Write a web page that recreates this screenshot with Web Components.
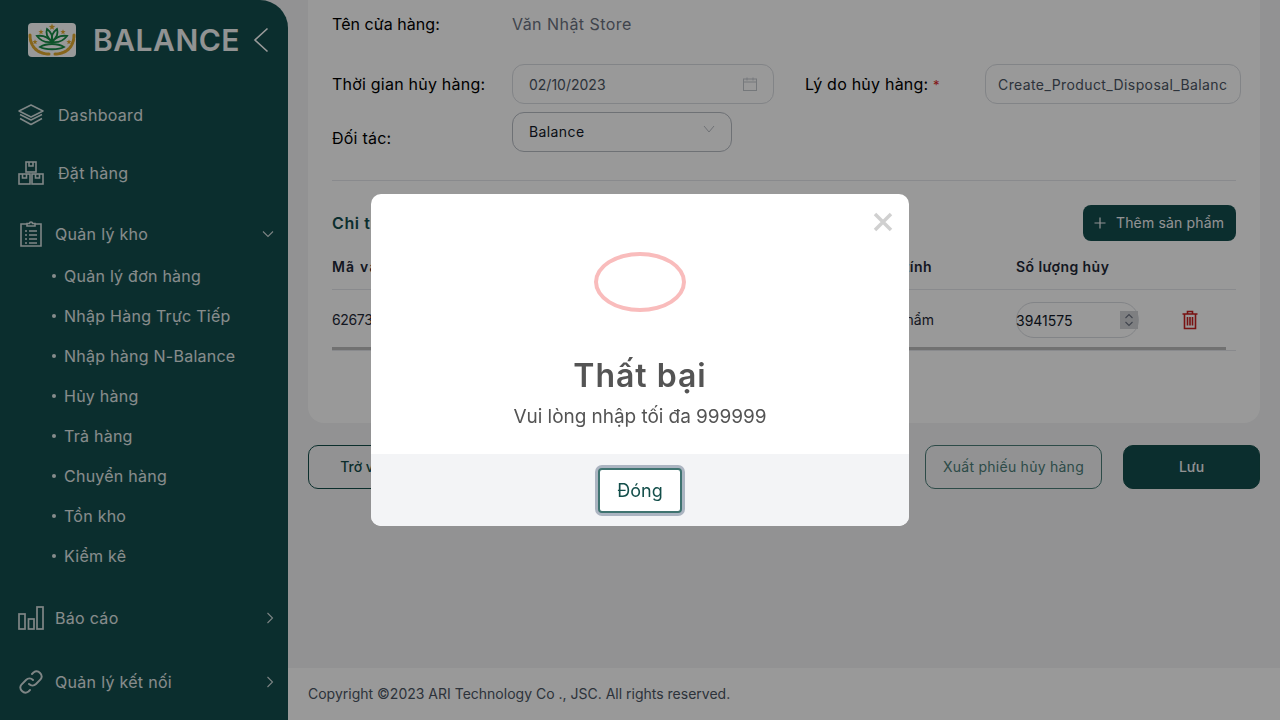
<!DOCTYPE html>
<html lang="vi">
<head>
<meta charset="utf-8">
<title>Balance</title>
<style>
  html, body { margin: 0; height: 100%; overflow: hidden; }
  body { font-family: Inter, "Noto Sans", sans-serif; }
</style>
</head>
<body>
<app-shell>
  <side-bar slot="side">
    <nav-item label="Dashboard" icon="layers" top="21"></nav-item>
    <nav-item label="Đặt hàng" icon="boxes" top="30"></nav-item>
    <nav-item label="Quản lý kho" icon="clipboard" arrow="down" top="33">
      <sub-item>Quản lý đơn hàng</sub-item>
      <sub-item>Nhập Hàng Trực Tiếp</sub-item>
      <sub-item>Nhập hàng N-Balance</sub-item>
      <sub-item>Hủy hàng</sub-item>
      <sub-item>Trả hàng</sub-item>
      <sub-item>Chuyển hàng</sub-item>
      <sub-item>Tồn kho</sub-item>
      <sub-item>Kiểm kê</sub-item>
    </nav-item>
    <nav-item label="Báo cáo" icon="chart" arrow="right" top="28"></nav-item>
    <nav-item label="Quản lý kết nối" icon="link" arrow="right" top="36"></nav-item>
  </side-bar>
  <disposal-form></disposal-form>
  <page-footer slot="footer">Copyright ©2023 ARI Technology Co ., JSC. All rights reserved.</page-footer>
</app-shell>
<alert-modal heading="Thất bại" message="Vui lòng nhập tối đa 999999" action="Đóng"></alert-modal>

<script>
const ICONS = {
  layers: '<svg width="26" height="22" viewBox="0 0 26 22" fill="none" stroke="currentColor" stroke-width="1.5" stroke-linejoin="round"><path d="M13 1 25 7 13 13 1 7Z"/><path d="M2 10.500 13 16 24 10.500"/><path d="M2 14.500 13 20.500 24 14.500"/></svg>',
  boxes: '<svg width="26" height="24" viewBox="0 0 26 24" fill="none" stroke="currentColor" stroke-width="1.6"><rect x="8" y="1" width="10" height="10"/><rect x="1" y="13" width="11" height="10"/><rect x="14" y="13" width="11" height="10"/><path d="M11 1v4h4V1M4.500 13v4h4v-4M17.500 13v4h4v-4"/></svg>',
  clipboard: '<svg width="22" height="26" viewBox="0 0 22 26" fill="none" stroke="currentColor" stroke-width="1.6"><path d="M7 3H1v22h20V3h-6"/><path d="M7 5V2.500h2.500a1.500 1.500 0 0 1 3 0H15V5Z"/><path d="M9 10h8M9 14h8M9 18h8M9 22h8" stroke-width="1.500"/><path d="M5 10h2M5 14h2M5 18h2M5 22h2" stroke-width="1.500"/></svg>',
  chart: '<svg width="26" height="24" viewBox="0 0 26 24" fill="none" stroke="currentColor" stroke-width="1.7"><rect x="1" y="8" width="6" height="15"/><rect x="10.500" y="13" width="5.500" height="10"/><rect x="19" y="1" width="6" height="22"/></svg>',
  link: '<svg width="24" height="24" viewBox="0 0 24 24" fill="none" stroke="currentColor" stroke-width="1.9" stroke-linecap="round" style="margin-left:-1px"><path d="M10 14a5 5 0 0 0 7 0l4.500-4.500a5 5 0 0 0-7-7L13 4"/><path d="M14 10a5 5 0 0 0-7 0l-4.500 4.500a5 5 0 0 0 7 7L11 20"/></svg>',
  down: '<svg width="12" height="8" viewBox="0 0 12 8" fill="none" stroke="currentColor" stroke-width="1.100"><path d="M1 1.500 6 6.500 11 1.500"/></svg>',
  right: '<svg width="8" height="12" viewBox="0 0 8 12" fill="none" stroke="currentColor" stroke-width="1.100"><path d="M1.500 1 6.500 6 1.500 11"/></svg>'
};

const star = (x, y, r) => {
  let pts = '';
  for (let i = 0; i < 10; i++) {
    const a = -Math.PI / 2 + i * Math.PI / 5;
    const d = i % 2 ? r * 0.42 : r;
    pts += (x + d * Math.cos(a)).toFixed(2) + ',' + (y + d * Math.sin(a)).toFixed(2) + ' ';
  }
  return `<polygon points="${pts}"/>`;
};

class AppShell extends HTMLElement {
  constructor() {
    super();
    this.attachShadow({ mode: 'open' }).innerHTML = `
      <style>
        :host { display: grid; grid-template-columns: 288px 1fr; width: 1280px; height: 720px; background: #f3f4f6; overflow: hidden; }
        main { display: flex; flex-direction: column; min-width: 0; height: 720px; }
        .content { flex: 1; min-height: 0; }
      </style>
      <slot name="side"></slot>
      <main>
        <div class="content"><slot></slot></div>
        <slot name="footer"></slot>
      </main>`;
  }
}

class SideBar extends HTMLElement {
  constructor() {
    super();
    this.attachShadow({ mode: 'open' }).innerHTML = `
      <style>
        :host { display: block; height: 720px; background: #134e4e; border-top-right-radius: 28px; color: #fff; overflow: hidden; }
        header { display: flex; align-items: center; height: 80px; padding-left: 28px; }
        .name { margin-left: 17px; font-size: 30px; font-weight: 600; letter-spacing: 0.5px; opacity: .95; }
        .back { margin-left: 13px; display: flex; }
      </style>
      <header>
        <svg width="48" height="34" viewBox="0 0 48 34">
          <rect width="48" height="34" rx="4" fill="#fff"/>
          <g fill="none" stroke="#e0a92e" stroke-width="3" stroke-linecap="round" stroke-dasharray="2.500 1.200">
            <path d="M2 12C2 24 10 31 21 31"/><path d="M46 12C46 24 38 31 27 31"/>
          </g>
          <g fill="#e0a92e">${star(24, 4, 3.4)}${star(13, 9, 2.8)}${star(35, 9, 2.8)}${star(7, 19, 2.8)}${star(41, 19, 2.8)}${star(24, 18, 2.6)}</g>
          <g fill="none" stroke="#178a45" stroke-width="1.800">
            <path d="M24 18C18 14 18 9 19 6C23 9 25 13 24 18Z"/><path d="M24 18C30 14 30 9 29 6C25 9 23 13 24 18Z"/>
            <path d="M24 19C17 20 12 17 9 13C15 12 20 14 24 19Z"/><path d="M24 19C31 20 36 17 39 13C33 12 28 14 24 19Z"/>
            <path d="M12 24C17 21 21 21 24 21C27 21 31 21 36 24C31 27 17 27 12 24Z"/>
          </g>
        </svg>
        <span class="name">BALANCE</span>
        <span class="back"><svg width="16" height="26" viewBox="0 0 16 26" fill="none" stroke="currentColor" stroke-width="1.600"><path d="M14.500 1.500 2 13 14.500 24.500"/></svg></span>
      </header>
      <slot></slot>`;
  }
}

class NavItem extends HTMLElement {
  constructor() {
    super();
    const name = this.getAttribute('icon');
    const arrow = this.getAttribute('arrow');
    const wide = name === 'layers' || name === 'boxes';
    const subs = this.children.length > 0;
    this.attachShadow({ mode: 'open' }).innerHTML = `
      <style>
        :host { display: block; margin-top: ${this.getAttribute('top')}px; }
        .row { display: flex; align-items: center; height: 28px; padding: 0 14px 0 18px; font-size: 16px; line-height: 28px; }
        .ico { width: 26px; display: flex; justify-content: center; margin-right: ${wide ? 14 : 11}px; opacity: .82; }
        .label { flex: 1; letter-spacing: 0.3px; opacity: .88; }
        .arrow { display: flex; opacity: .8; }
        .subs { margin-top: 8px; }
      </style>
      <div class="row">
        <span class="ico">${ICONS[name]}</span>
        <span class="label">${this.getAttribute('label')}</span>
        ${arrow ? `<span class="arrow">${ICONS[arrow]}</span>` : ''}
      </div>
      ${subs ? '<div class="subs"><slot></slot></div>' : ''}`;
  }
}

class SubItem extends HTMLElement {
  constructor() {
    super();
    this.attachShadow({ mode: 'open' }).innerHTML = `
      <style>
        :host { display: flex; align-items: center; height: 40px; padding-left: 52px; font-size: 16px; }
        i { width: 4px; height: 4px; border-radius: 50%; background: currentColor; margin-right: 8px; opacity: .88; }
        span { letter-spacing: 0.25px; opacity: .88; }
      </style>
      <i></i><span><slot></slot></span>`;
  }
}

class TextBox extends HTMLElement {
  constructor() {
    super();
    this.attachShadow({ mode: 'open' }).innerHTML = `
      <style>
        :host { display: flex; align-items: center; box-sizing: border-box; height: 40px; padding: 0 16px; border: 1px solid #d9dce1; border-radius: 12px; font-size: 14px; color: #4b5563; overflow: hidden; white-space: nowrap; }
        :host([dark]) { border-color: #b7bcc4; color: #111827; padding-bottom: 1px; letter-spacing: .4px; }
        .text { flex: 1; overflow: hidden; }
        ::slotted(svg) { flex: none; }
      </style>
      <span class="text"><slot></slot></span><slot name="end"></slot>`;
  }
}

class ActionButton extends HTMLElement {
  constructor() {
    super();
    this.attachShadow({ mode: 'open' }).innerHTML = `
      <style>
        :host { display: flex; align-items: center; justify-content: center; box-sizing: border-box; height: 44px; padding-bottom: 1px; border-radius: 10px; font-size: 14px; border: 1px solid #134e4a; color: #134e4a; white-space: nowrap; font-weight: 500; }
        :host([solid]) { background: #134e4e; color: #f3f4f6; }
        :host([soft]) { color: #4b7d78; border-color: #4b7d78; font-weight: 400; letter-spacing: .25px; }
      </style>
      <slot></slot>`;
  }
}

class DisposalForm extends HTMLElement {
  constructor() {
    super();
    this.attachShadow({ mode: 'open' }).innerHTML = `
      <style>
        :host { display: block; padding: 0 20px; color: #000; font-size: 16px; }
        .card { background: #fff; border-radius: 0 0 16px 16px; padding: 14px 24px 72px; height: 423px; box-sizing: border-box; }
        .store { display: flex; line-height: 20px; }
        .label { flex: none; width: 180px; letter-spacing: .22px; white-space: nowrap; }
        .store .label { letter-spacing: .05px; }
        .value { color: #6b7280; letter-spacing: .45px; }
        .grid { display: grid; grid-template-columns: 180px 262px 31px 180px 256px; margin-top: 30px; align-items: center; }
        .grid > * { min-width: 0; }
        .req { color: #dc2626; font-size: 13px; }
        .partner { display: grid; grid-template-columns: 180px 220px; margin-top: 8px; }
        .partner .label { align-self: end; line-height: 20px; padding-bottom: 4px; }
        hr { border: 0; border-top: 1px solid #e5e7eb; margin: 28px 0 24px; }
        .title { display: flex; justify-content: space-between; align-items: center; height: 36px; }
        h3 { margin: 0; font-size: 16px; font-weight: 600; color: #134e4e; letter-spacing: .6px; }
        .add { display: flex; align-items: center; gap: 10px; height: 36px; padding-bottom: 1px; width: 153px; box-sizing: border-box; padding-left: 11px; background: #134e4e; color: #f3f4f6; border-radius: 8px; font-size: 14px; letter-spacing: .15px; white-space: nowrap; }
        .cols { display: grid; align-items: center; white-space: nowrap; }
        .head { grid-template-columns: 268px 200px 132px 284px 20px; height: 45px; margin-top: 4px; padding-bottom: 2px; box-sizing: border-box; border-bottom: 1px solid #e5e7eb; font-size: 14px; font-weight: 600; color: #1f2937; letter-spacing: .45px; }
        .head .code { letter-spacing: 1.2px; }
        .body { grid-template-columns: 268px 200px 134px 248px 20px; padding: 12px 0 9px; font-size: 14px; color: #1f2937; }
        .end { text-align: right; }
        .body > span:not(.qty) { padding-bottom: 1px; }
        .body .code { letter-spacing: -.35px; }
        .qty { display: flex; align-items: center; justify-content: space-between; width: 123px; height: 36px; margin-left: 82px; box-sizing: border-box; border: 1px solid #d9dce1; border-radius: 18px; font-size: 14px; color: #111827; }
        .qty b { font-weight: 400; margin-left: -1px; }
        .spin { display: flex; align-items: center; justify-content: center; width: 18px; height: 18px; background: #d2d4d8; }
        .trash { display: block; }
        .bar { height: 3px; width: 894px; background: #bcbcbc; }
        .line { border-top: 1px solid #e5e7eb; }
        .actions { display: flex; gap: 21px; margin-top: 22px; }
        .actions .grow { flex: 1; }
        .b1 { width: 106px; }
        .b2 { width: 177px; }
        .b3 { width: 137px; }
      </style>
      <div class="card">
        <div class="store"><span class="label">Tên cửa hàng:</span><span class="value">Văn Nhật Store</span></div>
        <div class="grid">
          <span class="label">Thời gian hủy hàng:</span>
          <text-box>02/10/2023
            <svg slot="end" width="14" height="14" viewBox="0 0 14 14" fill="none" stroke="#c4c8ce" stroke-width="1"><rect x=".5" y="2" width="13" height="11.500"/><path d="M.5 5h13M4 .5v3M10 .5v3"/></svg>
          </text-box>
          <span></span>
          <span class="label">Lý do hủy hàng: <span class="req">*</span></span>
          <text-box style="padding:0 12px;letter-spacing:.4px">Create_Product_Disposal_Balance</text-box>
        </div>
        <div class="partner">
          <span class="label">Đối tác:</span>
          <text-box dark>Balance
            <svg slot="end" width="12" height="8" viewBox="0 0 12 8" fill="none" stroke="#b9bdc4" stroke-width="1" style="margin-top:-6px"><path d="M1 1 6 7 11 1"/></svg>
          </text-box>
        </div>
        <hr>
        <div class="title">
          <h3>Chi tiết sản phẩm</h3>
          <span class="add"><svg width="12" height="12" viewBox="0 0 12 12" stroke="currentColor" stroke-width="1.200"><path d="M6 .5v11M.5 6h11"/></svg>Thêm sản phẩm</span>
        </div>
        <div class="cols head"><span class="code">Mã vạch</span><span></span><span class="end">Đơn vị tính</span><span style="padding-left:84px">Số lượng hủy</span><span></span></div>
        <div class="cols body">
          <span class="code">62673</span><span></span><span class="end">Thành phẩm</span>
          <span class="qty"><b>3941575</b><span class="spin"><svg width="10" height="14" viewBox="0 0 10 14" fill="none" stroke="#6b7280" stroke-width="1.100"><path d="M1.500 5 5 1.500 8.500 5M1.500 9 5 12.500 8.500 9"/></svg></span></span>
          <svg class="trash" width="16" height="20" viewBox="0 0 16 20" fill="none" stroke="#c81e1e" stroke-width="1.600"><path d="M.5 4h15M5.500 4V1.500h5V4"/><path d="M2.500 4v14.500h11V4"/><path d="M5.500 7v8.500M8 7v8.500M10.500 7v8.500"/></svg>
        </div>
        <div class="bar"></div>
        <div class="line"></div>
      </div>
      <div class="actions">
        <action-button class="b1">Trở về</action-button>
        <span class="grow"></span>
        <action-button class="b2" soft>Xuất phiếu hủy hàng</action-button>
        <action-button class="b3" solid>Lưu</action-button>
      </div>`;
  }
}

class PageFooter extends HTMLElement {
  constructor() {
    super();
    this.attachShadow({ mode: 'open' }).innerHTML = `
      <style>
        :host { display: flex; align-items: center; flex: none; height: 52px; padding: 0 0 1px 20px; box-sizing: border-box; background: #fff; font-size: 14px; color: #4b5563; }
      </style>
      <slot></slot>`;
  }
}

class AlertModal extends HTMLElement {
  constructor() {
    super();
    this.attachShadow({ mode: 'open' }).innerHTML = `
      <style>
        :host { position: fixed; inset: 0; display: flex; align-items: center; justify-content: center; background: rgba(0,0,0,.4); }
        .popup { position: relative; width: 538px; height: 332px; display: flex; flex-direction: column; align-items: center; background: #fff; border-radius: 10px; overflow: hidden; color: #545454; }
        .close { position: absolute; top: 18px; right: 16px; display: flex; }
        .icon { box-sizing: border-box; width: 92px; height: 60px; margin-top: 58px; border: 4px solid #f9bcbc; border-radius: 50%; }
        h2 { margin: 41px 0 0; font-size: 32px; line-height: 46px; font-weight: 600; letter-spacing: 1px; }
        p { margin: 4px 0 0; font-size: 19px; line-height: 28px; letter-spacing: -.05px; }
        .foot { margin-top: auto; width: 100%; height: 72px; display: flex; align-items: center; justify-content: center; background: #f3f4f6; }
        .btn { box-sizing: border-box; width: 84px; height: 45px; display: flex; align-items: center; justify-content: center; background: #fff; border: 2px solid #3f7370; border-radius: 4px; box-shadow: 0 0 0 3px rgba(100,116,139,.5); font-size: 18px; color: #134e4a; }
      </style>
      <div class="popup">
        <span class="close"><svg width="20" height="20" viewBox="0 0 20 20" stroke="#d0d0d0" stroke-width="3.500"><path d="M2 2 18 18M18 2 2 18"/></svg></span>
        <div class="icon"></div>
        <h2>${this.getAttribute('heading')}</h2>
        <p>${this.getAttribute('message')}</p>
        <div class="foot"><div class="btn">${this.getAttribute('action')}</div></div>
      </div>`;
  }
}

customElements.define('app-shell', AppShell);
customElements.define('side-bar', SideBar);
customElements.define('nav-item', NavItem);
customElements.define('sub-item', SubItem);
customElements.define('text-box', TextBox);
customElements.define('action-button', ActionButton);
customElements.define('disposal-form', DisposalForm);
customElements.define('page-footer', PageFooter);
customElements.define('alert-modal', AlertModal);
</script>
</body>
</html>
